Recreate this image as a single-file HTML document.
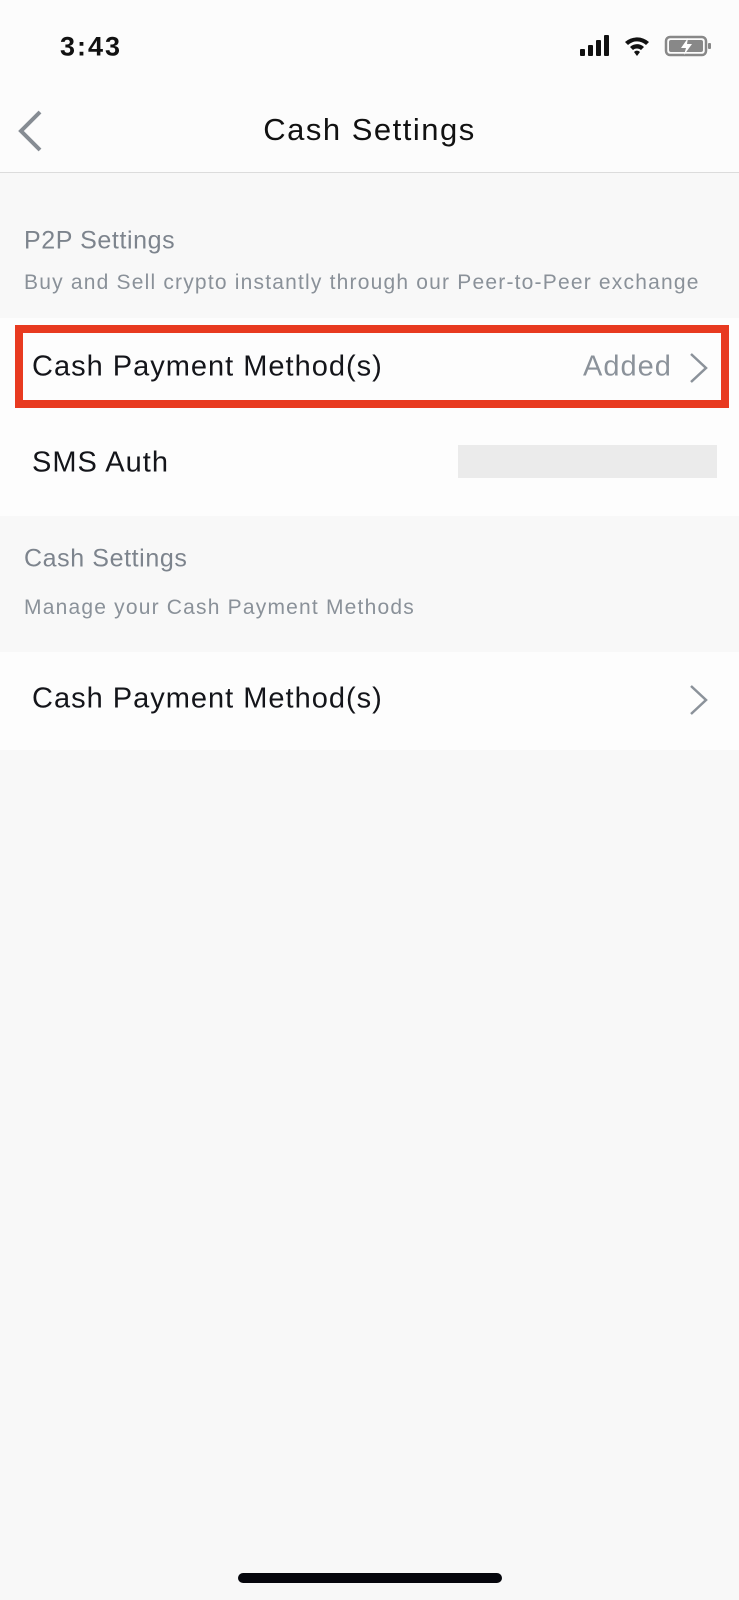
<!DOCTYPE html>
<html><head><meta charset="utf-8"><style>
body{margin:0;width:739px;height:1600px;background:#f8f8f8;font-family:"Liberation Sans",sans-serif;position:relative;overflow:hidden}
.a{position:absolute;white-space:nowrap}
.row{position:absolute;left:0;width:739px;background:#fdfdfd}
.t{font-size:29px;letter-spacing:1px;color:#14151a;transform:translateY(-50%)}
.h{font-size:25px;letter-spacing:0.6px;color:#7d848d;transform:translateY(-50%)}
.s{font-size:21px;letter-spacing:1.2px;color:#8a9199;transform:translateY(-50%)}
</style></head><body>
<div class="row" style="top:0;height:173px;background:#fcfcfc"></div>
<div class="a" style="left:60px;top:47px;transform:translateY(-50%);font-size:27px;letter-spacing:2px;font-weight:bold;color:#111">3:43</div>
<svg class="a" style="left:578px;top:34px" width="135" height="24" viewBox="0 0 135 24">
<rect x="2" y="15" width="5" height="7" rx="1" fill="#111"/><rect x="10" y="11" width="5" height="11" rx="1" fill="#111"/><rect x="18" y="6" width="5" height="16" rx="1" fill="#111"/><rect x="26" y="1" width="5" height="21" rx="1" fill="#111"/>
<path d="M47 8a18 18 0 0 1 24 0l-3 3a13 13 0 0 0-18 0z M52 13a10 10 0 0 1 14 0l-3 3a6 6 0 0 0-8 0z M56 18a4 4 0 0 1 6 0l-3 4z" fill="#111"/>
<rect x="88" y="3" width="40" height="18" rx="4" fill="none" stroke="#888" stroke-width="2.5"/><rect x="91" y="6" width="34" height="12" rx="2" fill="#888"/><rect x="130" y="9" width="3" height="6" rx="1" fill="#888"/>
<path d="M110 4l-7 10h5l-2 7 8-11h-5z" fill="#fff"/></svg>
<svg class="a" style="left:16px;top:110px" width="28" height="42" viewBox="0 0 28 42"><path d="M24 2L5 21l19 19" fill="none" stroke="#868c93" stroke-width="4"/></svg>
<div class="a t" style="left:0;width:739px;text-align:center;top:130px;color:#111;font-size:31px;letter-spacing:1.5px">Cash Settings</div>
<div class="a" style="left:0;top:172px;width:739px;height:1px;background:#dcdcdc"></div>
<div class="a h" style="left:24px;top:241px">P2P Settings</div>
<div class="a s" style="left:24px;top:283px">Buy and Sell crypto instantly through our Peer-to-Peer exchange</div>
<div class="row" style="top:318px;height:198px"></div>
<div class="a" style="left:15px;top:325px;width:698px;height:67px;border:8px solid #e83a20"></div>
<div class="a t" style="left:32px;top:367px">Cash Payment Method(s)</div>
<div class="a t" style="left:583px;top:367px;color:#8b929a">Added</div>
<svg class="a" style="left:688px;top:352px" width="22" height="32" viewBox="0 0 22 32"><path d="M3 2l15 14L3 30" fill="none" stroke="#8b929a" stroke-width="2.5"/></svg>
<div class="a t" style="left:32px;top:463px">SMS Auth</div>
<div class="a" style="left:458px;top:445px;width:259px;height:33px;background:#ebebeb"></div>
<div class="a h" style="left:24px;top:559px">Cash Settings</div>
<div class="a s" style="left:24px;top:608px">Manage your Cash Payment Methods</div>
<div class="row" style="top:652px;height:98px"></div>
<div class="a t" style="left:32px;top:699px">Cash Payment Method(s)</div>
<svg class="a" style="left:688px;top:684px" width="22" height="32" viewBox="0 0 22 32"><path d="M3 2l15 14L3 30" fill="none" stroke="#8b929a" stroke-width="2.5"/></svg>
<div class="a" style="left:238px;top:1573px;width:264px;height:10px;border-radius:5px;background:#05060c"></div>
</body></html>
